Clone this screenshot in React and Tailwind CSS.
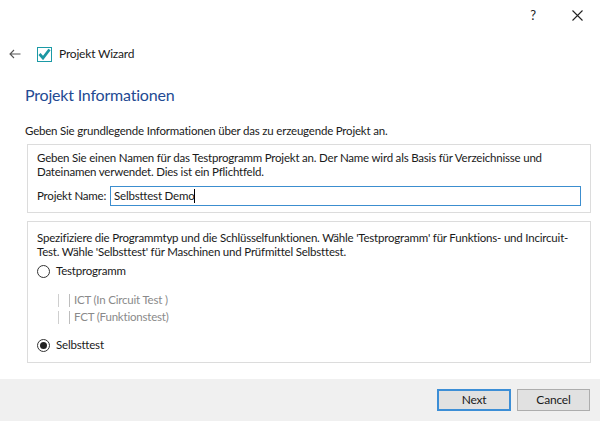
import React from "react";

const font = { fontFamily: 'Lato, "Noto Sans", sans-serif' };

export default function App() {
  return (
    <div
      className="w-[600px] h-[421px] bg-white flex flex-col text-[11.5px] tracking-[-0.2px] text-[#1a1a1a] overflow-hidden"
      style={font}
    >
      {/* title bar */}
      <div className="h-[30px] flex items-center justify-end">
        <span className="w-[20px] text-center text-[13px] leading-none text-[#222] mr-[29px]">?</span>
        <svg className="mr-[17px]" width="11" height="11" viewBox="0 0 11 11">
          <path d="M0.5 0.5 L10.5 10.5 M10.5 0.5 L0.5 10.5" stroke="#222" strokeWidth="1.1" fill="none" />
        </svg>
      </div>
      {/* header */}
      <div className="h-[16px] mt-[16px] flex items-center">
        <svg className="ml-[9px]" width="12" height="10" viewBox="0 0 12 10">
          <path d="M11.5 5 H1 M5 1 L1 5 L5 9" stroke="#555" strokeWidth="1.1" fill="none" />
        </svg>
        <div className="ml-[16px] w-[15px] h-[15px] border border-[#1b9aa6] bg-white flex items-center justify-center">
          <svg width="13" height="12" viewBox="0 0 13 12">
            <path d="M1.5 6 L5 10 L11.5 1.5" stroke="#1b97a3" strokeWidth="2.8" fill="none" strokeLinejoin="miter" />
          </svg>
        </div>
        <span className="ml-[7px] text-[12px]">Projekt Wizard</span>
      </div>
      {/* content */}
      <div className="flex-1 px-[25px] flex flex-col">
        <div className="mt-[23px] text-[16px] leading-[20px] text-[#234a93]">Projekt Informationen</div>
        <div className="mt-[18px] leading-[16px] whitespace-nowrap">
          Geben Sie grundlegende Informationen über das zu erzeugende Projekt an.
        </div>
        <div className="mt-[5px] ml-[2px] w-[564px] h-[69px] border border-[#dcdcdc] px-[9px] pt-[6px]">
          <div className="leading-[14px] whitespace-nowrap">
            Geben Sie einen Namen für das Testprogramm Projekt an. Der Name wird als Basis für Verzeichnisse und
            <br />
            Dateinamen verwendet. Dies ist ein Pflichtfeld.
          </div>
          <div className="mt-[7px] flex items-center">
            <span className="w-[73px] shrink-0 whitespace-nowrap">Projekt Name:</span>
            <div className="w-[471px] shrink-0 h-[20px] border border-[#3c8ecf] flex items-center px-[3px]">
              <span>Selbsttest Demo</span>
              <span className="w-[1px] h-[14px] bg-black"></span>
            </div>
          </div>
        </div>
        <div className="mt-[8px] ml-[2px] w-[564px] h-[142px] border border-[#dcdcdc] px-[9px] pt-[9px]">
          <div className="leading-[14px] whitespace-nowrap">
            Spezifiziere die Programmtyp und die Schlüsselfunktionen. Wähle 'Testprogramm' für Funktions- und Incircuit-
            <br />
            Test. Wähle 'Selbsttest' für Maschinen und Prüfmittel Selbsttest.
          </div>
          <div className="mt-[4px] flex items-center h-[16px]">
            <span className="w-[13px] h-[13px] rounded-full border border-[#333] bg-white"></span>
            <span className="ml-[6px]">Testprogramm</span>
          </div>
          <div className="mt-[13px] flex items-center h-[16px] text-[#8a8a8a]">
            <span className="ml-[21px] w-[1px] h-[13px] bg-[#cfcfcf]"></span>
            <span className="ml-[10px] w-[1px] h-[13px] bg-[#bdbdbd]"></span>
            <span className="ml-[4px]">ICT (In Circuit Test )</span>
          </div>
          <div className="mt-[1px] flex items-center h-[16px] text-[#8a8a8a]">
            <span className="ml-[21px] w-[1px] h-[13px] bg-[#cfcfcf]"></span>
            <span className="ml-[10px] w-[1px] h-[13px] bg-[#bdbdbd]"></span>
            <span className="ml-[4px]">FCT (Funktionstest)</span>
          </div>
          <div className="mt-[12px] flex items-center h-[16px]">
            <span className="w-[13px] h-[13px] rounded-full border border-[#333] bg-white flex items-center justify-center">
              <span className="w-[7px] h-[7px] rounded-full bg-[#222]"></span>
            </span>
            <span className="ml-[6px]">Selbsttest</span>
          </div>
        </div>
      </div>
      {/* footer */}
      <div className="h-[42px] bg-[#f0f0f0] flex items-start justify-end pt-[10px] pr-[10px] gap-[6px]">
        <button className="w-[74px] h-[22px] border-2 border-[#3c8ed6] bg-[#e1e1e1] text-[12px] leading-none text-[#1a1a1a]" style={font}>
          Next
        </button>
        <button className="w-[73px] h-[22px] border border-[#adadad] bg-[#e1e1e1] text-[12px] leading-none text-[#1a1a1a]" style={font}>
          Cancel
        </button>
      </div>
    </div>
  );
}
